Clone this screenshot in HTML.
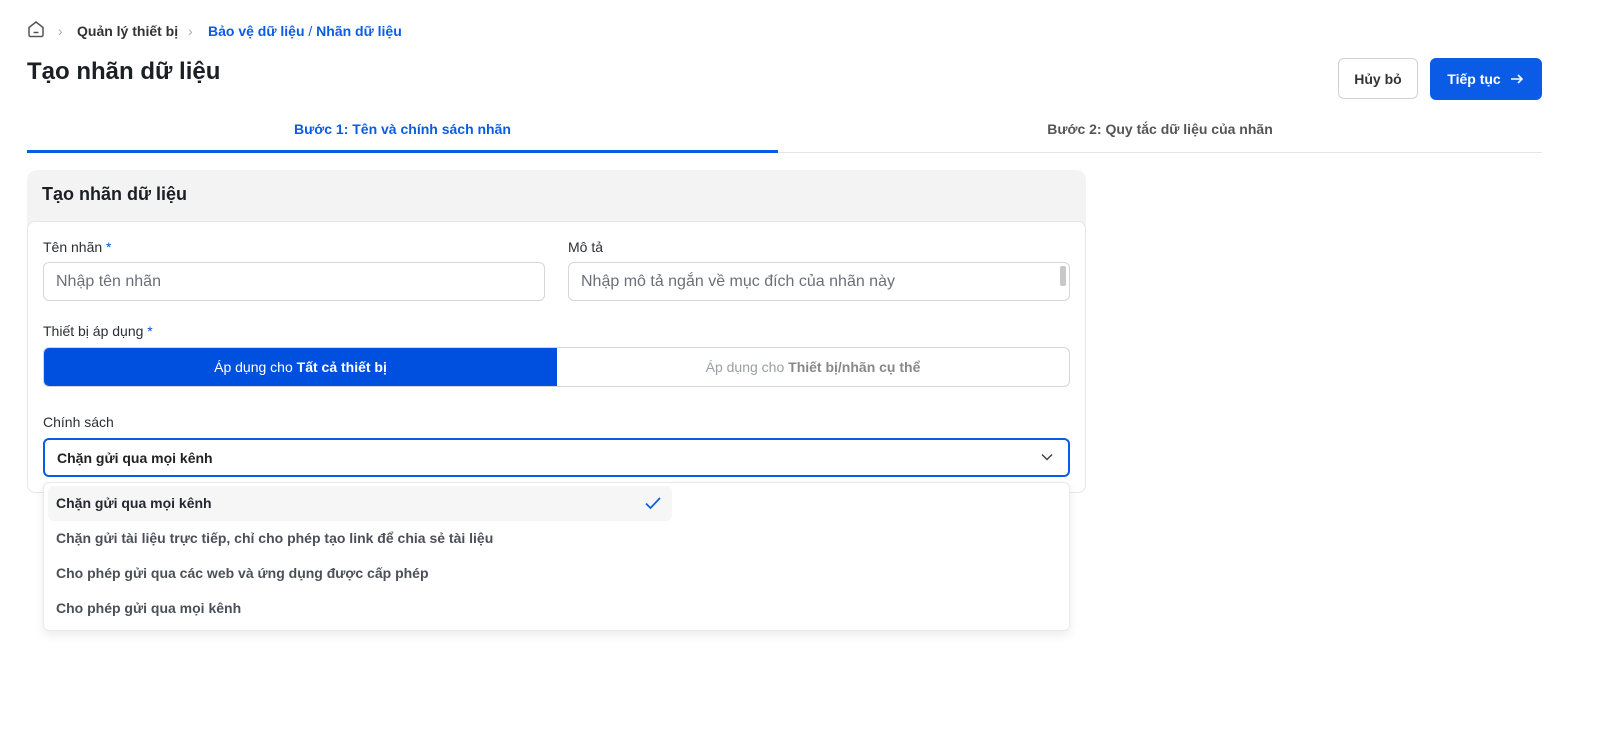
<!DOCTYPE html>
<html><head><meta charset="utf-8"><style>
*{box-sizing:border-box;margin:0;padding:0}
body{width:1606px;height:741px;background:#fff;font-family:"Liberation Sans","Noto Sans CJK SC",sans-serif;color:#1f2328;position:relative;overflow:hidden}
.a{position:absolute}
.bc{top:22px;font-size:14px;line-height:18px}
.lbl{font-size:14px;color:#2b2f36}
.star{color:#0050e0}
.inp{border:1px solid #d4d6da;border-radius:6px;background:#fff;font-size:16px;color:#6b7078;padding-left:12px;display:flex;align-items:center}
.opt{left:56px;font-size:14px;color:#4b5058;font-weight:bold}
</style></head><body>
<svg class="a" style="left:27px;top:20px" width="18" height="18" viewBox="0 0 18 18" fill="none" stroke="#555" stroke-width="1.5"><path d="M2 7.5 9 2l7 5.5V15a1.5 1.5 0 0 1-1.5 1.5h-11A1.5 1.5 0 0 1 2 15z"/><path d="M6.5 12.5h5"/></svg>
<div class="a bc" style="left:58px;color:#aaa">›</div>
<div class="a bc" style="left:77px;color:#333;font-weight:bold">Quản lý thiết bị</div>
<div class="a bc" style="left:188px;color:#aaa">›</div>
<div class="a bc" style="left:208px;color:#0a5ce6;font-weight:bold">Bảo vệ dữ liệu <span style="font-weight:normal">/</span> Nhãn dữ liệu</div>
<div class="a" style="left:27px;top:58px;font-size:24px;font-weight:bold;color:#1c1f24">Tạo nhãn dữ liệu</div>
<div class="a" style="left:1338px;top:58px;width:80px;height:41px;border:1px solid #cfd2d6;border-radius:6px;font-size:14px;font-weight:bold;color:#333;display:flex;align-items:center;justify-content:center">Hủy bỏ</div>
<div class="a" style="left:1430px;top:58px;width:112px;height:42px;background:#0a5ce6;border-radius:6px;font-size:14px;font-weight:bold;color:#fff;display:flex;align-items:center;justify-content:center;gap:8px">Tiếp tục <svg width="16" height="16" viewBox="0 0 16 16" fill="none" stroke="#fff" stroke-width="1.6"><path d="M2 8h11M9 4l4 4-4 4"/></svg></div>
<div class="a" style="left:27px;top:121px;width:751px;text-align:center;font-size:14px;font-weight:bold;color:#0a5ce6">Bước 1: Tên và chính sách nhãn</div>
<div class="a" style="left:778px;top:121px;width:764px;text-align:center;font-size:14px;font-weight:bold;color:#555">Bước 2: Quy tắc dữ liệu của nhãn</div>
<div class="a" style="left:27px;top:152px;width:1515px;height:1px;background:#e3e5e8"></div>
<div class="a" style="left:27px;top:150px;width:751px;height:3px;background:#0a5ce6"></div>
<div class="a" style="left:27px;top:170px;width:1059px;height:323px;background:#f3f3f3;border-radius:10px"></div>
<div class="a" style="left:42px;top:184px;font-size:18px;font-weight:bold;color:#1c1f24">Tạo nhãn dữ liệu</div>
<div class="a" style="left:27px;top:221px;width:1059px;height:272px;background:#fff;border:1px solid #e5e6e8;border-radius:8px"></div>
<div class="a lbl" style="left:43px;top:239px">Tên nhãn<span class="star"> *</span></div>
<div class="a lbl" style="left:568px;top:239px">Mô tả</div>
<div class="a inp" style="left:43px;top:262px;width:502px;height:39px">Nhập tên nhãn</div>
<div class="a inp" style="left:568px;top:262px;width:502px;height:39px">Nhập mô tả ngắn về mục đích của nhãn này</div>
<div class="a" style="left:1060px;top:266px;width:6px;height:20px;background:#c8c8c8;border-radius:2px"></div>
<div class="a lbl" style="left:43px;top:323px">Thiết bị áp dụng<span class="star"> *</span></div>
<div class="a" style="left:43px;top:347px;width:1027px;height:40px;border:1px solid #d4d6da;border-radius:6px;overflow:hidden;display:flex;font-size:14px">
<div style="width:513px;background:#0050e0;color:#fff;display:flex;align-items:center;justify-content:center">Áp dụng cho&nbsp;<b>Tất cả thiết bị</b></div>
<div style="flex:1;color:#9a9ea5;display:flex;align-items:center;justify-content:center">Áp dụng cho&nbsp;<b style="color:#888">Thiết bị/nhãn cụ thể</b></div></div>
<div class="a lbl" style="left:43px;top:414px">Chính sách</div>
<div class="a" style="left:43px;top:438px;width:1027px;height:39px;border:2px solid #0a5ce6;border-radius:6px;font-size:14px;font-weight:bold;color:#222;padding-left:12px;display:flex;align-items:center">Chặn gửi qua mọi kênh</div>
<svg class="a" style="left:1040px;top:451px" width="14" height="12" viewBox="0 0 14 12" fill="none" stroke="#444" stroke-width="1.5"><path d="M2 3.5l5 5 5-5"/></svg>
<div class="a" style="left:43px;top:482px;width:1027px;height:149px;background:#fff;border:1px solid #e8e9eb;border-radius:6px;box-shadow:0 4px 10px rgba(0,0,0,.08)"></div>
<div class="a" style="left:48px;top:486px;width:624px;height:35px;background:#f6f6f7;border-radius:6px"></div>
<div class="a opt" style="top:495px;color:#25282d">Chặn gửi qua mọi kênh</div>
<svg class="a" style="left:644px;top:495px" width="18" height="16" viewBox="0 0 18 16" fill="none" stroke="#0a5ce6" stroke-width="1.7"><path d="M2 8.5l4.5 4.5L16 3"/></svg>
<div class="a opt" style="top:530px">Chặn gửi tài liệu trực tiếp, chỉ cho phép tạo link để chia sẻ tài liệu</div>
<div class="a opt" style="top:565px">Cho phép gửi qua các web và ứng dụng được cấp phép</div>
<div class="a opt" style="top:600px">Cho phép gửi qua mọi kênh</div>
</body></html>
